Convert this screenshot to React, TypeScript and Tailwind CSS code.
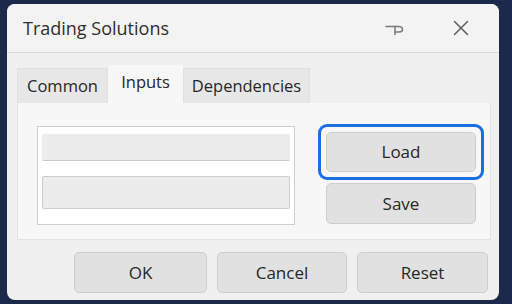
import React from "react";

const font = { fontFamily: '"Open Sans", "Noto Sans", sans-serif' };

function PinIcon() {
  return (
    <svg width="20" height="12" viewBox="0 0 20 12" fill="none" stroke="#7a7a7a" strokeWidth="1.5" strokeLinecap="round">
      <path d="M1 3.5 H13.5 Q17.5 3.5 17.5 6.5 Q17.5 9 14 9 H10" />
      <path d="M10 3.5 V11.5" />
    </svg>
  );
}

function CloseIcon() {
  return (
    <svg width="16" height="16" viewBox="0 0 16 16" fill="none" stroke="#5c5c5c" strokeWidth="1.5" strokeLinecap="round">
      <path d="M1.5 1.5 L14.5 14.5 M14.5 1.5 L1.5 14.5" />
    </svg>
  );
}

function Button({ label, className }: { label: string; className: string }) {
  return (
    <button
      className={`flex items-center justify-center rounded-[5px] border border-[#cdcdcd] bg-[#e1e1e1] text-[17px] font-medium text-[#262626] ${className}`}
    >
      {label}
    </button>
  );
}

export default function App() {
  return (
    <div className="h-[304px] w-[512px] bg-[#1b2a4a] pl-[7px] pr-[13px] pt-[4px] pb-[4px]" style={font}>
      <div className="flex h-[296px] w-[492px] flex-col overflow-hidden rounded-[8px] bg-[#f0f0f0]">
        {/* Title bar */}
        <div className="flex h-[49px] items-center border-b border-[#dadada] bg-[#f3f3f3] pl-[16px]">
          <span className="text-[18px] text-[#2e2e2e]">Trading Solutions</span>
          <div className="ml-auto mr-[30px] flex items-center gap-[48px]">
            <span className="mt-[2px]"><PinIcon /></span>
            <CloseIcon />
          </div>
        </div>

        {/* Tabs */}
        <div className="mt-[12px] flex items-end pl-[10px] text-[16.5px] font-medium text-[#262626]">
          <div className="flex h-[35px] w-[91px] items-center justify-center border border-b-0 border-[#e0e0e0] bg-[#e7e7e7]">
            Common
          </div>
          <div className="flex h-[38px] w-[75px] items-center justify-center bg-[#f7f7f7] pb-[3px]">
            Inputs
          </div>
          <div className="flex h-[35px] w-[127px] items-center justify-center border border-b-0 border-[#e0e0e0] bg-[#e7e7e7]">
            Dependencies
          </div>
        </div>

        {/* Panel */}
        <div className="ml-[10px] flex h-[137px] w-[474px] border border-t-0 border-[#e3e3e3] bg-[#f7f7f7] pl-[19px] pt-[23px]">
          <div className="flex h-[99px] w-[258px] flex-col border border-[#cfcfcf] bg-white px-[4px] pt-[7px]">
            <div className="h-[27px] rounded-[2px] border-b border-[#c8c8c8] bg-[#ececec]" />
            <div className="mt-[15px] h-[33px] rounded-[2px] border border-[#cdcdcd] bg-[#ececec]" />
          </div>
          <div className="ml-[23px] -mt-[2px] flex flex-col">
            <div className="rounded-[9px] border-[3px] border-[#1a6fe3] p-[5px]">
              <Button label="Load" className="h-[40px] w-[150px] border-[#9fb8d6] bg-[#c9d9ec]" />
            </div>
            <Button label="Save" className="mx-[8px] mt-[3px] h-[41px] w-[150px]" />
          </div>
        </div>

        {/* Footer buttons */}
        <div className="mt-[12px] flex gap-[10px] pl-[67px]">
          <Button label="OK" className="h-[41px] w-[133px]" />
          <Button label="Cancel" className="h-[41px] w-[130px]" />
          <Button label="Reset" className="h-[41px] w-[131px]" />
        </div>
      </div>
    </div>
  );
}
